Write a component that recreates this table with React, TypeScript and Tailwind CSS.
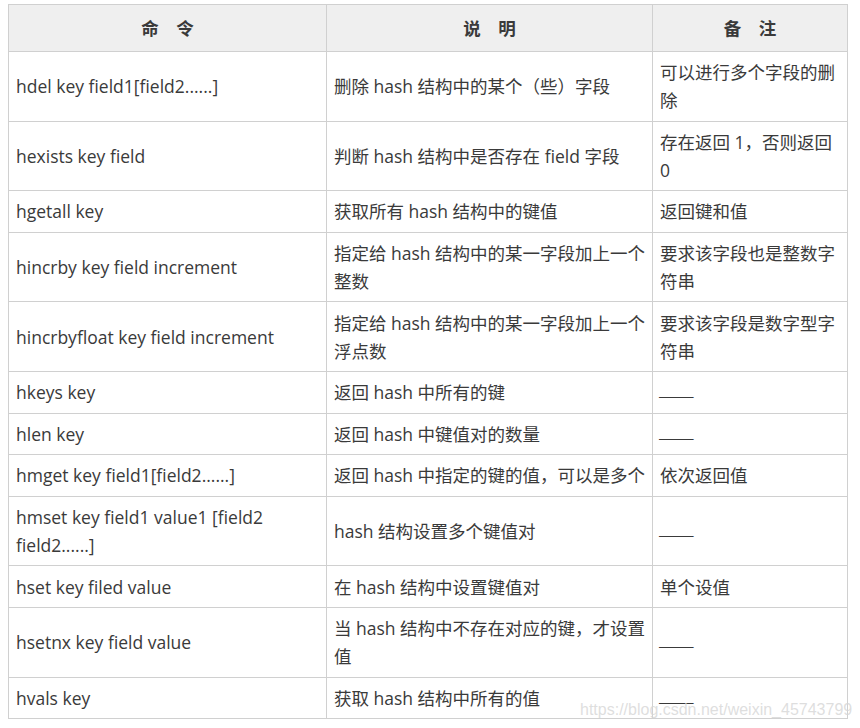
const rows: { cmd: string[]; desc: string[]; note: string[] }[] = [
  { cmd: ["hdel key field1[field2......]"], desc: ["删除 hash 结构中的某个（些）字段"], note: ["可以进行多个字段的删", "除"] },
  { cmd: ["hexists key field"], desc: ["判断 hash 结构中是否存在 field 字段"], note: ["存在返回 1，否则返回", "0"] },
  { cmd: ["hgetall key"], desc: ["获取所有 hash 结构中的键值"], note: ["返回键和值"] },
  { cmd: ["hincrby key field increment"], desc: ["指定给 hash 结构中的某一字段加上一个", "整数"], note: ["要求该字段也是整数字", "符串"] },
  { cmd: ["hincrbyfloat key field increment"], desc: ["指定给 hash 结构中的某一字段加上一个", "浮点数"], note: ["要求该字段是数字型字", "符串"] },
  { cmd: ["hkeys key"], desc: ["返回 hash 中所有的键"], note: ["——"] },
  { cmd: ["hlen key"], desc: ["返回 hash 中键值对的数量"], note: ["——"] },
  { cmd: ["hmget key field1[field2......]"], desc: ["返回 hash 中指定的键的值，可以是多个"], note: ["依次返回值"] },
  { cmd: ["hmset key field1 value1 [field2", "field2......]"], desc: ["hash 结构设置多个键值对"], note: ["——"] },
  { cmd: ["hset key filed value"], desc: ["在 hash 结构中设置键值对"], note: ["单个设值"] },
  { cmd: ["hsetnx key field value"], desc: ["当 hash 结构中不存在对应的键，才设置", "值"], note: ["——"] },
  { cmd: ["hvals key"], desc: ["获取 hash 结构中所有的值"], note: ["——"] },
];

function Lines({ lines }: { lines: string[] }) {
  return (
    <>
      {lines.map((l, i) =>
        l === "——" ? (
          // dash row: CJK em-dashes join into one line
          <span key={i} className="block font-['Noto_Sans_CJK_SC',sans-serif] font-light text-[22px] leading-[28px] -ml-[2px] translate-y-[2px]">
            {l}
          </span>
        ) : (
          <span key={i} className="block">
            {l}
          </span>
        )
      )}
    </>
  );
}

export default function App() {
  const font = "font-['Open_Sans','Noto_Sans_CJK_SC',sans-serif]";
  const td = "border border-[#d0d0d0] pl-[7px] pr-1 py-[6.3px] align-middle whitespace-nowrap";
  const th = "border border-[#d0d0d0] py-[9px] text-center font-bold";

  return (
    <div className={`relative min-h-[728px] w-[860px] overflow-hidden bg-white pl-2 pt-1 ${font} text-[17.5px] leading-[28px] text-[#3a3a3a]`}>
      <table className="table-fixed border-collapse w-[839px]">
        <colgroup>
          <col className="w-[318px]" />
          <col className="w-[326px]" />
          <col className="w-[195px]" />
        </colgroup>
        <thead>
          <tr className="bg-[#efefef]">
            <th className={th}>命　令</th>
            <th className={th}>说　明</th>
            <th className={th}>备　注</th>
          </tr>
        </thead>
        <tbody>
          {rows.map((r, i) => (
            <tr key={i}>
              <td className={td}>
                <Lines lines={r.cmd} />
              </td>
              <td className={td}>
                <Lines lines={r.desc} />
              </td>
              <td className={td}>
                <Lines lines={r.note} />
              </td>
            </tr>
          ))}
        </tbody>
      </table>

      {/* watermark */}
      <div className="pointer-events-none absolute left-[580px] top-[700px] whitespace-nowrap font-['Liberation_Sans',sans-serif] text-[16px] leading-[20px] text-[#d6d6d6]/80">
        https://blog.csdn.net/weixin_45743799
      </div>
    </div>
  );
}
